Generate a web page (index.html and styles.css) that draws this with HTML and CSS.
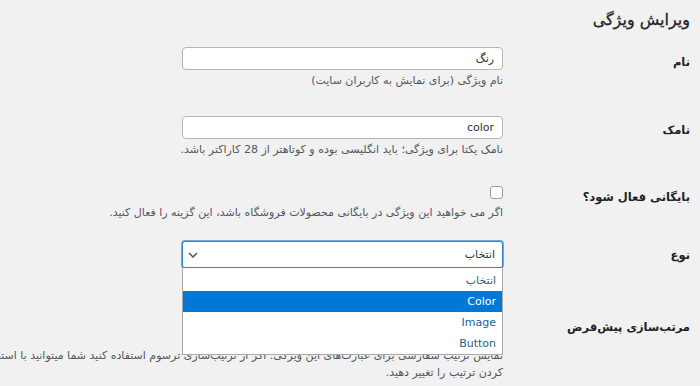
FILE: index.html
```html
<!DOCTYPE html>
<html lang="fa">
<head>
    <meta charset="UTF-8">
    <meta name="viewport" content="width=device-width, initial-scale=1.0">
    <title>ویرایش ویژگی</title>
    <link rel="stylesheet" href="styles.css">
</head>
<body>
    <div class="wrap" dir="rtl">
        <h1>ویرایش ویژگی</h1>

        <div class="form-table">
            <div class="row row-name">
                <div class="th"><label for="attribute_label">نام</label></div>
                <div class="td">
                    <input type="text" id="attribute_label" class="field" value="رنگ">
                    <p class="description">نام ویژگی (برای نمایش به کاربران سایت)</p>
                </div>
            </div>

            <div class="row row-slug">
                <div class="th"><label for="attribute_name">نامک</label></div>
                <div class="td">
                    <input type="text" id="attribute_name" class="field" value="color">
                    <p class="description">نامک یکتا برای ویژگی؛ باید انگلیسی بوده و کوتاهتر از 28 کاراکتر باشد.</p>
                </div>
            </div>

            <div class="row row-public">
                <div class="th"><label for="attribute_public">بایگانی فعال شود؟</label></div>
                <div class="td">
                    <span class="checkbox" id="attribute_public"></span>
                    <p class="description">اگر می خواهید این ویژگی در بایگانی محصولات فروشگاه باشد، این گزینه را فعال کنید.</p>
                </div>
            </div>

            <div class="row row-type">
                <div class="th"><label>نوع</label></div>
                <div class="td">
                    <div class="select is-open">
                        <span>انتخاب</span>
                        <svg class="chevron" width="10" height="6" viewBox="0 0 10 6">
                            <polyline points="1,1 5,5 9,1" fill="none" stroke="#50575e" stroke-width="1.5"/>
                        </svg>
                        <!-- لیست باز شده -->
                        <ul class="dropdown">
                            <li>انتخاب</li>
                            <li class="active">Color</li>
                            <li>Image</li>
                            <li>Button</li>
                        </ul>
                    </div>
                </div>
            </div>

            <div class="row row-orderby">
                <div class="th"><label>مرتب‌سازی پیش‌فرض</label></div>
                <div class="td">
                    <!-- زیر لیست باز شده پنهان است -->
                    <div class="select"></div>
                    <p class="description">
                        <span class="line-long">نمایش ترتیب سفارشی برای عبارت‌های این ویژگی. اگر از ترتیب‌سازی ترسوم استفاده کنید شما میتوانید با استفاده از کشیدن و رها</span>
                        <span>کردن ترتیب را تغییر دهید.</span>
                    </p>
                </div>
            </div>
        </div>
    </div>
</body>
</html>
```

FILE: styles.css
```css
/* پایه */
body {
    margin: 0;
    background: #f1f1f1;
    color: #1d2327;
    font-family: "DejaVu Sans", "Noto Sans", sans-serif;
    overflow: hidden;
}

.wrap {
    padding-right: 10px;
}

h1 {
    margin: 0;
    padding-top: 7px;
    font-size: 16px;
    line-height: 26px;
    font-weight: 400;
    color: #1d2327;
    -webkit-text-stroke: 0.3px #1d2327;
}

/* جدول فرم */
.row {
    display: flex;
}

.th {
    width: 187px;
    flex-shrink: 0;
}

.th label {
    display: block;
    font-size: 11.5px;
    font-weight: bold;
    line-height: 16px;
}

.td {
    flex: 1;
    min-width: 0;
    position: relative;
}

.row-name { padding-top: 14px; }
.row-name .th { padding-top: 7px; }

.row-slug { padding-top: 27px; }
.row-slug .th { padding-top: 6px; }

.row-public { padding-top: 28px; }
.row-public .th { padding-top: 3px; }

.row-type { padding-top: 20px; }
.row-type .th { padding-top: 6px; }

.row-orderby { padding-top: 40px; }
.row-orderby .th { padding-top: 11px; }

.field {
    display: block;
    box-sizing: border-box;
    width: 321px;
    height: 23px;
    margin: 0;
    padding: 0 8px;
    border: 1px solid #b4b7ba;
    border-radius: 4px;
    background: #fff;
    color: #2c3338;
    font-family: "DejaVu Sans", sans-serif;
    font-size: 11px;
}

.description {
    margin: 3px 0 0;
    font-size: 11px;
    line-height: 16px;
    color: #50575e;
    white-space: nowrap;
}

.checkbox {
    display: block;
    width: 11px;
    height: 11px;
    border: 1px solid #9a9da1;
    border-radius: 3px;
    background: #fff;
}

.row-public .description {
    margin-top: 6px;
}

/* سلکت */
.select {
    position: relative;
    box-sizing: border-box;
    width: 321px;
    height: 27px;
    padding: 0 7px 0 5px;
    display: flex;
    align-items: center;
    justify-content: space-between;
    border: 1px solid #8c8f94;
    border-radius: 3px;
    background: #fff;
    font-size: 11px;
    color: #2c3338;
}

.select.is-open {
    border-color: #3582c4;
    box-shadow: 0 0 0 1px #6fa8dc;
    z-index: 5;
}

.dropdown {
    position: absolute;
    top: 26px;
    left: -1px;
    right: -1px;
    margin: 0;
    padding: 2px 0 0;
    list-style: none;
    background: #fff;
    border: 1px solid #a9a9a9;
    border-top: none;
}

.dropdown li {
    height: 21px;
    line-height: 21px;
    padding: 0 6px;
    font-size: 11px;
    color: #28608a;
}

.dropdown li.active {
    background: #0078d7;
    color: #fff;
}

.row-orderby .description {
    margin-top: 12px;
    line-height: 17px;
}

.row-orderby .description span {
    display: block;
}
```
